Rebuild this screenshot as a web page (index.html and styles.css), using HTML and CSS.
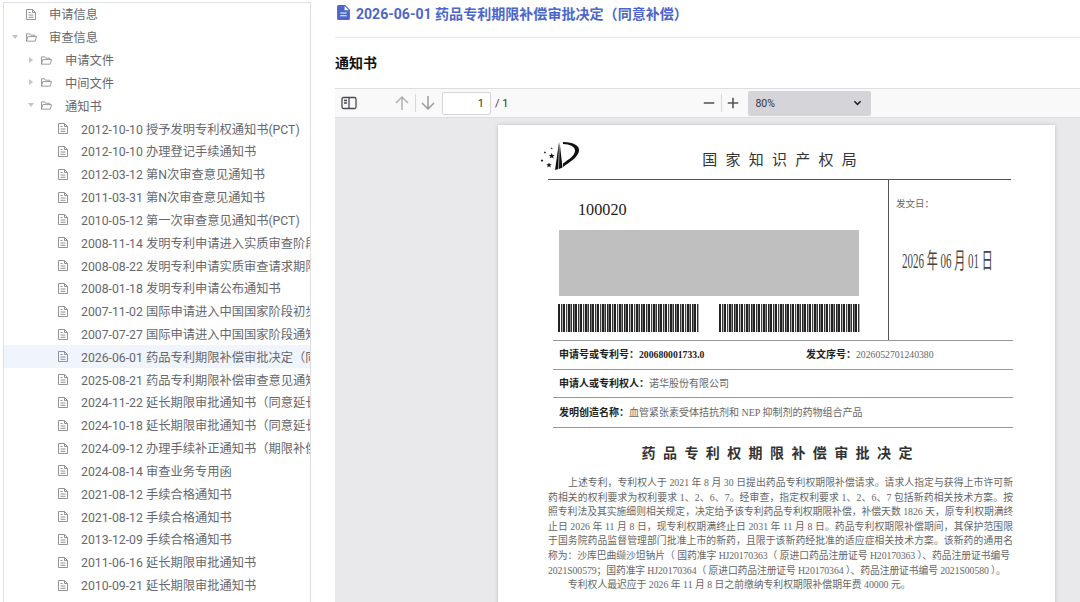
FILE: index.html
```html
<!DOCTYPE html>
<html lang="zh-CN">
<head>
  <meta charset="UTF-8">
  <meta name="viewport" content="width=device-width, initial-scale=1.0">
  <title>审查信息</title>
  <link rel="stylesheet" href="styles.css">
</head>
<body>
  <svg class="defs" width="0" height="0">
    <symbol id="i-file" viewBox="0 0 10 11">
      <path d="M.5 .5h6l3 3v7h-9z M6.500 .5v3h3 M2.500 3.500h2 M2.500 6h5 M2.500 8.300h5" fill="none" stroke="currentColor" stroke-width=".9"/>
    </symbol>
    <symbol id="i-folder" viewBox="0 0 12 9">
      <path d="M.5 8.500v-8h3.500l1 1.500h4.500v1.500 M.5 8.500h9.500l1.500-5h-9.500z" fill="none" stroke="currentColor" stroke-width=".9"/>
    </symbol>
  </svg>
  <div class="layout">
    <aside class="tree">
      <div class="row lv0"><span class="arrow"></span><svg class="ico"><use href="#i-file"/></svg><span class="label">申请信息</span></div>
      <div class="row lv0"><span class="arrow open"></span><svg class="ico folder"><use href="#i-folder"/></svg><span class="label">审查信息</span></div>
      <div class="row lv1"><span class="arrow shut"></span><svg class="ico folder"><use href="#i-folder"/></svg><span class="label">申请文件</span></div>
      <div class="row lv1"><span class="arrow shut"></span><svg class="ico folder"><use href="#i-folder"/></svg><span class="label">中间文件</span></div>
      <div class="row lv1"><span class="arrow open"></span><svg class="ico folder"><use href="#i-folder"/></svg><span class="label">通知书</span></div>
      <div class="row lv2"><svg class="ico"><use href="#i-file"/></svg><span class="label">2012-10-10 授予发明专利权通知书(PCT)</span></div>
      <div class="row lv2"><svg class="ico"><use href="#i-file"/></svg><span class="label">2012-10-10 办理登记手续通知书</span></div>
      <div class="row lv2"><svg class="ico"><use href="#i-file"/></svg><span class="label">2012-03-12 第N次审查意见通知书</span></div>
      <div class="row lv2"><svg class="ico"><use href="#i-file"/></svg><span class="label">2011-03-31 第N次审查意见通知书</span></div>
      <div class="row lv2"><svg class="ico"><use href="#i-file"/></svg><span class="label">2010-05-12 第一次审查意见通知书(PCT)</span></div>
      <div class="row lv2"><svg class="ico"><use href="#i-file"/></svg><span class="label">2008-11-14 发明专利申请进入实质审查阶段通知书</span></div>
      <div class="row lv2"><svg class="ico"><use href="#i-file"/></svg><span class="label">2008-08-22 发明专利申请实质审查请求期限届满通知书</span></div>
      <div class="row lv2"><svg class="ico"><use href="#i-file"/></svg><span class="label">2008-01-18 发明专利申请公布通知书</span></div>
      <div class="row lv2"><svg class="ico"><use href="#i-file"/></svg><span class="label">2007-11-02 国际申请进入中国国家阶段初步审查通知书</span></div>
      <div class="row lv2"><svg class="ico"><use href="#i-file"/></svg><span class="label">2007-07-27 国际申请进入中国国家阶段通知书</span></div>
      <div class="row lv2 current"><svg class="ico"><use href="#i-file"/></svg><span class="label">2026-06-01 药品专利期限补偿审批决定（同意补偿）</span></div>
      <div class="row lv2"><svg class="ico"><use href="#i-file"/></svg><span class="label">2025-08-21 药品专利期限补偿审查意见通知书</span></div>
      <div class="row lv2"><svg class="ico"><use href="#i-file"/></svg><span class="label">2024-11-22 延长期限审批通知书（同意延长）</span></div>
      <div class="row lv2"><svg class="ico"><use href="#i-file"/></svg><span class="label">2024-10-18 延长期限审批通知书（同意延长）</span></div>
      <div class="row lv2"><svg class="ico"><use href="#i-file"/></svg><span class="label">2024-09-12 办理手续补正通知书（期限补偿）</span></div>
      <div class="row lv2"><svg class="ico"><use href="#i-file"/></svg><span class="label">2024-08-14 审查业务专用函</span></div>
      <div class="row lv2"><svg class="ico"><use href="#i-file"/></svg><span class="label">2021-08-12 手续合格通知书</span></div>
      <div class="row lv2"><svg class="ico"><use href="#i-file"/></svg><span class="label">2021-08-12 手续合格通知书</span></div>
      <div class="row lv2"><svg class="ico"><use href="#i-file"/></svg><span class="label">2013-12-09 手续合格通知书</span></div>
      <div class="row lv2"><svg class="ico"><use href="#i-file"/></svg><span class="label">2011-06-16 延长期限审批通知书</span></div>
      <div class="row lv2"><svg class="ico"><use href="#i-file"/></svg><span class="label">2010-09-21 延长期限审批通知书</span></div>
    </aside>

    <main class="content">
      <h1 class="doc-title">
        <svg class="title-ico" viewBox="0 0 12 14"><path d="M1.500 0H7.500L12 4.500V12.500A1.500 1.500 0 0 1 10.500 14H1.500A1.500 1.500 0 0 1 0 12.500V1.500A1.500 1.500 0 0 1 1.500 0Z M7 1V5H11Z M3 7V8H9V7Z M3 9.500V10.500H9V9.500Z" fill="currentColor" fill-rule="evenodd"/></svg>
        2026-06-01 药品专利期限补偿审批决定（同意补偿）
      </h1>
      <h2 class="section-title">通知书</h2>

      <div class="viewer">
        <div class="toolbar">
          <svg class="tool tool-side" viewBox="0 0 16 16"><path d="M2.500 2.500h11a1.500 1.500 0 0 1 1.500 1.500v8a1.500 1.500 0 0 1-1.500 1.500h-11a1.500 1.500 0 0 1-1.500-1.500v-8a1.500 1.500 0 0 1 1.500-1.500z M8 2.500v11 M3 5.500h3 M3 8h3" fill="none" stroke="currentColor" stroke-width="1.300"/></svg>
          <svg class="tool tool-up" viewBox="0 0 16 16"><path d="M8 15V2 M2 8l6-6 6 6" fill="none" stroke="currentColor" stroke-width="1.500"/></svg>
          <span class="tool-sep"></span>
          <svg class="tool tool-down" viewBox="0 0 16 16"><path d="M8 1v13 M2 8l6 6 6-6" fill="none" stroke="currentColor" stroke-width="1.500"/></svg>
          <span class="page-box">1</span>
          <span class="page-total">/ 1</span>
          <svg class="tool tool-minus" viewBox="0 0 16 16"><path d="M2 8h12" fill="none" stroke="currentColor" stroke-width="1.800"/></svg>
          <span class="tool-sep"></span>
          <svg class="tool tool-plus" viewBox="0 0 16 16"><path d="M2 8h12 M8 2v12" fill="none" stroke="currentColor" stroke-width="1.800"/></svg>
          <div class="zoom-select">80%
            <svg class="chev" viewBox="0 0 10 6"><path d="M1.500 1l3.500 3.500L8.500 1" fill="none" stroke="currentColor" stroke-width="1.700"/></svg>
          </div>
        </div>

        <div class="stage">
          <article class="sheet">
            <header class="sheet-head">
              <svg class="emblem" viewBox="0 0 40 30">
                <path d="M19 1L15 29L18.400 28Z M19.600 1L19 28L22.500 26.500Z" fill="#111"/>
                <path d="M23 1C34 1 40 5 39 10C38 16 30 21 23 26L23 22.500C29 18 34.500 15 35 10C35.500 6 30 3 23 3Z" fill="#111"/>
                <path d="M11.700 12l.9 2h2.100l-1.700 1.300.7 2.200-2-1.300-2 1.300.7-2.200-1.700-1.300h2.100z M9 21.500l.8 1.800h2l-1.600 1.200.6 2-1.800-1.200-1.800 1.200.6-2-1.600-1.200h2z M2 18l.5 1h1l-.8 .7.3 1.100-1-.6-1 .6.3-1.100-.8-.7h1z M5 10l.4 .9h.9l-.7 .6.3 1-.9-.6-.9 .6.3-1-.7-.6h.9z M11.700 6.200l.3 .7h.7l-.5 .5.2 .8-.7-.5-.7 .5.2-.8-.5-.5h.7z" fill="#111"/>
              </svg>
              <div class="office">国 家 知 识 产 权 局</div>
            </header>
            <div class="top-grid">
              <div class="address">
                <div class="postcode">100020</div>
                <div class="redacted"></div>
                <div class="barcodes">
                  <div class="barcode"></div>
                  <div class="barcode"></div>
                </div>
              </div>
              <div class="issue">
                <div class="issue-label">发文日：</div>
                <div class="issue-date">2026 年 06 月 01 日</div>
              </div>
            </div>
            <div class="field field-split">
              <div class="field-half"><b>申请号或专利号：</b><b class="num">200680001733.0</b></div>
              <div class="field-half"><b>发文序号：</b><span class="num">2026052701240380</span></div>
            </div>
            <div class="field field-short"><b>申请人或专利权人：</b>诺华股份有限公司</div>
            <div class="field field-tall"><b>发明创造名称：</b>血管紧张素受体拮抗剂和 NEP 抑制剂的药物组合产品</div>
            <div class="decision">药 品 专 利 权 期 限 补 偿 审 批 决 定</div>
            <div class="para">
              <div class="line first">上述专利，专利权人于 2021 年 8 月 30 日提出药品专利权期限补偿请求。请求人指定与获得上市许可新</div>
              <div class="line">药相关的权利要求为权利要求 1、2、6、7。经审查，指定权利要求 1、2、6、7 包括新药相关技术方案。按</div>
              <div class="line">照专利法及其实施细则相关规定，决定给予该专利药品专利权期限补偿，补偿天数 1826 天，原专利权期满终</div>
              <div class="line">止日 2026 年 11 月 8 日，现专利权期满终止日 2031 年 11 月 8 日。药品专利权期限补偿期间，其保护范围限</div>
              <div class="line">于国务院药品监督管理部门批准上市的新药，且限于该新药经批准的适应症相关技术方案。该新药的通用名</div>
              <div class="line tight short">称为：沙库巴曲缬沙坦钠片（ 国药准字 HJ20170363（ 原进口药品注册证号 H20170363 ）、药品注册证书编号</div>
              <div class="line loose tight">2021S00579；国药准字 HJ20170364（ 原进口药品注册证号 H20170364 ）、药品注册证书编号 2021S00580 ）。</div>
              <div class="line first loose">专利权人最迟应于 2026 年 11 月 8 日之前缴纳专利权期限补偿期年费 40000 元。</div>
            </div>
          </article>
        </div>
      </div>
    </main>
  </div>
</body>
</html>
```

FILE: styles.css
```css
html, body {
  margin: 0;
  padding: 0;
  height: 100%;
  overflow: hidden;
  background: #fff;
}
body {
  font-family: Roboto, "Noto Sans CJK SC", sans-serif;
  color: #66686d;
}
.defs { position: absolute; }

.layout {
  display: flex;
  height: 602px;
}

/* left tree */
.tree {
  width: 306px;
  margin: 2px 0 0 3px;
  flex: none;
  border-top: 1px solid #dcdfe6;
  border-left: 1px solid #dcdfe6;
  border-right: 1px solid #dcdfe6;
  overflow: hidden;
}
.row {
  display: flex;
  align-items: center;
  height: 22.84px;
  font-size: 12.25px;
  white-space: nowrap;
}
.row.current { background: #f0f4fc; }
.lv0 { padding-left: 8px; }
.lv1 { padding-left: 24px; }
.lv2 { padding-left: 54px; }
.arrow {
  width: 5px;
  height: 7px;
  margin-right: 9px;
  flex: none;
  position: relative;
}
.lv1 .arrow { margin-right: 8px; }
.arrow.open::before {
  content: "";
  position: absolute;
  left: -.5px;
  top: 1px;
  border-left: 3px solid transparent;
  border-right: 3px solid transparent;
  border-top: 4px solid #c0c4cc;
}
.arrow.shut::before {
  content: "";
  position: absolute;
  left: 1px;
  top: 0;
  border-top: 3.500px solid transparent;
  border-bottom: 3.500px solid transparent;
  border-left: 4px solid #c0c4cc;
}
.ico {
  width: 10px;
  height: 11px;
  flex: none;
  color: #85878c;
  margin-right: 13px;
}
.ico.folder {
  width: 11px;
  height: 9px;
  margin-right: 12px;
}
.lv1 .ico.folder { margin-right: 13px; }

/* right side */
.content {
  flex: 1;
  min-width: 0;
  margin-left: 24px;
}
.doc-title {
  display: flex;
  align-items: center;
  gap: 6px;
  height: 38px;
  margin: 0;
  padding-bottom: 12px;
  box-sizing: border-box;
  border-bottom: 1px solid #e4e7ed;
  font-size: 14.050px;
  font-weight: 700;
  color: #4d66c9;
  white-space: nowrap;
}
.title-ico {
  width: 13px;
  height: 15px;
  margin-left: 2px;
  flex: none;
}
.section-title {
  height: 50px;
  margin: 0;
  font-size: 14px;
  font-weight: 700;
  line-height: 50px;
  color: #111;
}

/* pdf viewer */
.viewer {
  height: 514px;
  background: #e9e9ec;
  display: flex;
  flex-direction: column;
}
.toolbar {
  display: flex;
  align-items: center;
  height: 28px;
  flex: none;
  background: #f9f9fa;
  border-top: 1px solid #ddd;
  border-bottom: 1px solid #ddd;
  color: #5b5b66;
}
.tool { flex: none; display: block; }
.tool-side { width: 16px; height: 16px; margin-left: 6px; color: #4a4a52; }
.tool-up { width: 16px; height: 16px; margin-left: 37px; color: #b0b0b5; }
.tool-down { width: 16px; height: 16px; color: #9a9a9f; }
.tool-sep {
  width: 1px;
  height: 18px;
  margin: 0 4.500px;
  background: #d8d8dc;
  flex: none;
}
.page-box {
  width: 49px;
  height: 23px;
  margin-left: 6px;
  box-sizing: border-box;
  padding-right: 6px;
  border: 1px solid #d6d6da;
  border-radius: 2px;
  background: #fff;
  text-align: right;
  font-size: 11px;
  line-height: 21px;
  color: #333;
}
.page-total {
  margin-left: 4px;
  font-size: 11px;
  color: #333;
}
.tool-minus { width: 14px; height: 14px; margin-left: 194px; color: #55555c; }
.tool-plus { width: 14px; height: 14px; color: #55555c; }
.zoom-select {
  display: flex;
  align-items: center;
  justify-content: space-between;
  width: 123px;
  height: 25px;
  margin-left: 8px;
  box-sizing: border-box;
  padding: 0 9px 0 7px;
  background: #d5d5d9;
  border-radius: 2px;
  font-size: 10.500px;
  color: #333;
}
.chev { width: 9px; height: 6px; color: #222; }

.stage {
  flex: 1;
  overflow: hidden;
  padding-top: 7px;
}
.sheet {
  width: 557px;
  height: 600px;
  margin-left: 163px;
  box-sizing: border-box;
  padding: 14px 42px 0 50px;
  background: #fff;
  box-shadow: 0 0 4px rgba(0, 0, 0, .18);
  font-family: "Liberation Serif", "Noto Sans CJK SC", serif;
  color: #666;
  font-size: 10px;
}
.sheet-head {
  position: relative;
  height: 40px;
  margin-right: 2px;
  border-bottom: 1px solid #555;
  text-align: center;
}
.emblem {
  position: absolute;
  left: -8px;
  top: 2px;
  width: 40px;
  height: 30px;
}
.office {
  padding-top: 12px;
  font-size: 15px;
  line-height: 18px;
  word-spacing: 4.500px;
  color: #333;
}
.top-grid {
  display: grid;
  grid-template-columns: 341px 1fr;
  height: 160px;
}
.address {
  padding: 21px 0 0 11px;
  border-right: 1px solid #555;
}
.postcode {
  height: 29px;
  padding-left: 19px;
  font-size: 16.200px;
  color: #222;
}
.redacted {
  width: 300px;
  height: 66px;
  background: #bfbfbf;
}
.barcodes {
  display: flex;
  gap: 20px;
  margin: 8px 0 0 -1px;
}
.barcode {
  width: 141px;
  height: 28px;
  background: repeating-linear-gradient(90deg,
    #222 0 2px, #fff 2px 3px, #333 3px 4px, #aaa 4px 5px, #222 5px 7px, #fff 7px 8px,
    #444 8px 9px, #ccc 9px 10px, #222 10px 12px, #888 12px 13px, #333 13px 14px, #fff 14px 15px,
    #222 15px 16px, #777 16px 17px);
}
.issue { padding: 16px 0 0 7px; }
.issue-label { font-size: 9.500px; color: #666; }
.issue-date {
  margin: 39px 0 0 6px;
  font-size: 22px;
  line-height: 24px;
  color: #444;
  transform: scaleX(.5);
  transform-origin: 0 50%;
  white-space: nowrap;
}
.field {
  margin-left: 5px;
  padding-left: 6px;
  box-sizing: border-box;
  border-top: 1px solid #999;
  height: 29px;
  line-height: 28px;
}
.field-short { height: 28px; line-height: 27px; }
.field-tall { height: 30px; line-height: 29px; }
.field b { color: #222; }
.field-split { display: flex; }
.field-half { width: 247px; flex: none; }
.num { font-size: 9.700px; }
.decision {
  height: 49px;
  margin-left: 5px;
  padding: 16px 12px 0 0;
  box-sizing: border-box;
  border-top: 1px solid #999;
  text-align: center;
  font-size: 14px;
  font-weight: 700;
  line-height: 20px;
  word-spacing: 3.900px;
  color: #333;
}
.para {
  line-height: 14.600px;
  font-size: 9.800px;
}
.line {
  text-align: justify;
  text-align-last: justify;
  white-space: nowrap;
}
.line.first { padding-left: 20px; }
.line.loose { text-align-last: left; }
.line.tight { letter-spacing: -.1px; }
.line.short { margin-right: 3px; letter-spacing: -.13px; }
```
